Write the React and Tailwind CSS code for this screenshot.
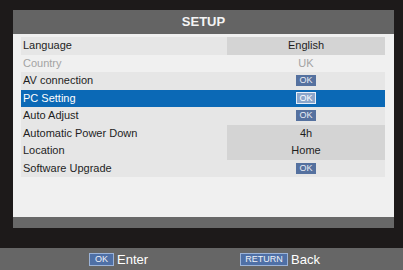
import React from "react";

const rows = [
  { label: "Language", value: "English", kind: "box" },
  { label: "Country", value: "UK", kind: "disabled" },
  { label: "AV connection", kind: "ok" },
  { label: "PC Setting", kind: "ok", selected: true },
  { label: "Auto Adjust", kind: "ok" },
  { label: "Automatic Power Down", value: "4h", kind: "box" },
  { label: "Location", value: "Home", kind: "box" },
  { label: "Software Upgrade", kind: "ok" },
];

function OkBadge({ selected }) {
  return (
    <span
      className={
        selected
          ? "flex h-[12px] w-[20px] items-center justify-center border border-[#e8eef8] bg-[#8ba6cb] text-[9px] leading-none text-white"
          : "flex h-[11px] w-[20px] items-center justify-center bg-[#55719f] text-[9px] leading-none text-[#e8ecf4]"
      }
    >
      OK
    </span>
  );
}

function Row({ row }) {
  const { label, value, kind, selected } = row;
  let rowCls = "flex h-[17.5px] items-stretch text-[11px] leading-none ";
  if (selected) rowCls += "bg-[#0b69b6] text-white";
  else if (kind === "disabled") rowCls += "text-[#a3a3a3]";
  else rowCls += "bg-[#e6e6e6] text-[#1e1e1e]";

  let valueCls = "flex w-[158px] items-center justify-center ";
  if (kind === "box" && !selected) valueCls += "bg-[#d4d4d4]";

  return (
    <div className={rowCls}>
      <div className="flex flex-1 items-center pl-[2px]">{label}</div>
      <div className={valueCls}>
        {kind === "ok" ? <OkBadge selected={selected} /> : value}
      </div>
    </div>
  );
}

export default function App() {
  return (
    <div
      className="flex h-[270px] w-[403px] flex-col bg-[#1d1a1a]"
      style={{ fontFamily: '"Liberation Sans", Arial, sans-serif' }}
    >
      <div className="ml-[13px] mt-[10px] w-[381px]">
        <div className="flex h-[24px] items-center justify-center bg-[#646464] text-[13px] font-bold text-[#f4f4f4]">
          SETUP
        </div>
        <div className="h-[183px] bg-[#f0f0f0] pl-[8px] pr-[9px] pt-[3px]">
          {rows.map((r) => (
            <Row key={r.label} row={r} />
          ))}
        </div>
        <div className="h-[11px] bg-[#686868]" />
      </div>
      <div className="flex-1" />
      <div className="flex h-[22px] items-center bg-[#666666] pl-[89px] text-[13px] text-white">
        <span className="flex h-[13px] w-[25px] items-center justify-center border border-[#9bb3d8] bg-[#4f70a6] text-[9px] leading-none text-[#eef2f8]">
          OK
        </span>
        <span className="ml-[3px] leading-none">Enter</span>
        <span className="ml-[92px] flex h-[13px] w-[48px] items-center justify-center border border-[#9bb3d8] bg-[#4f70a6] text-[9px] leading-none text-[#eef2f8]">
          RETURN
        </span>
        <span className="ml-[3px] leading-none">Back</span>
      </div>
    </div>
  );
}
